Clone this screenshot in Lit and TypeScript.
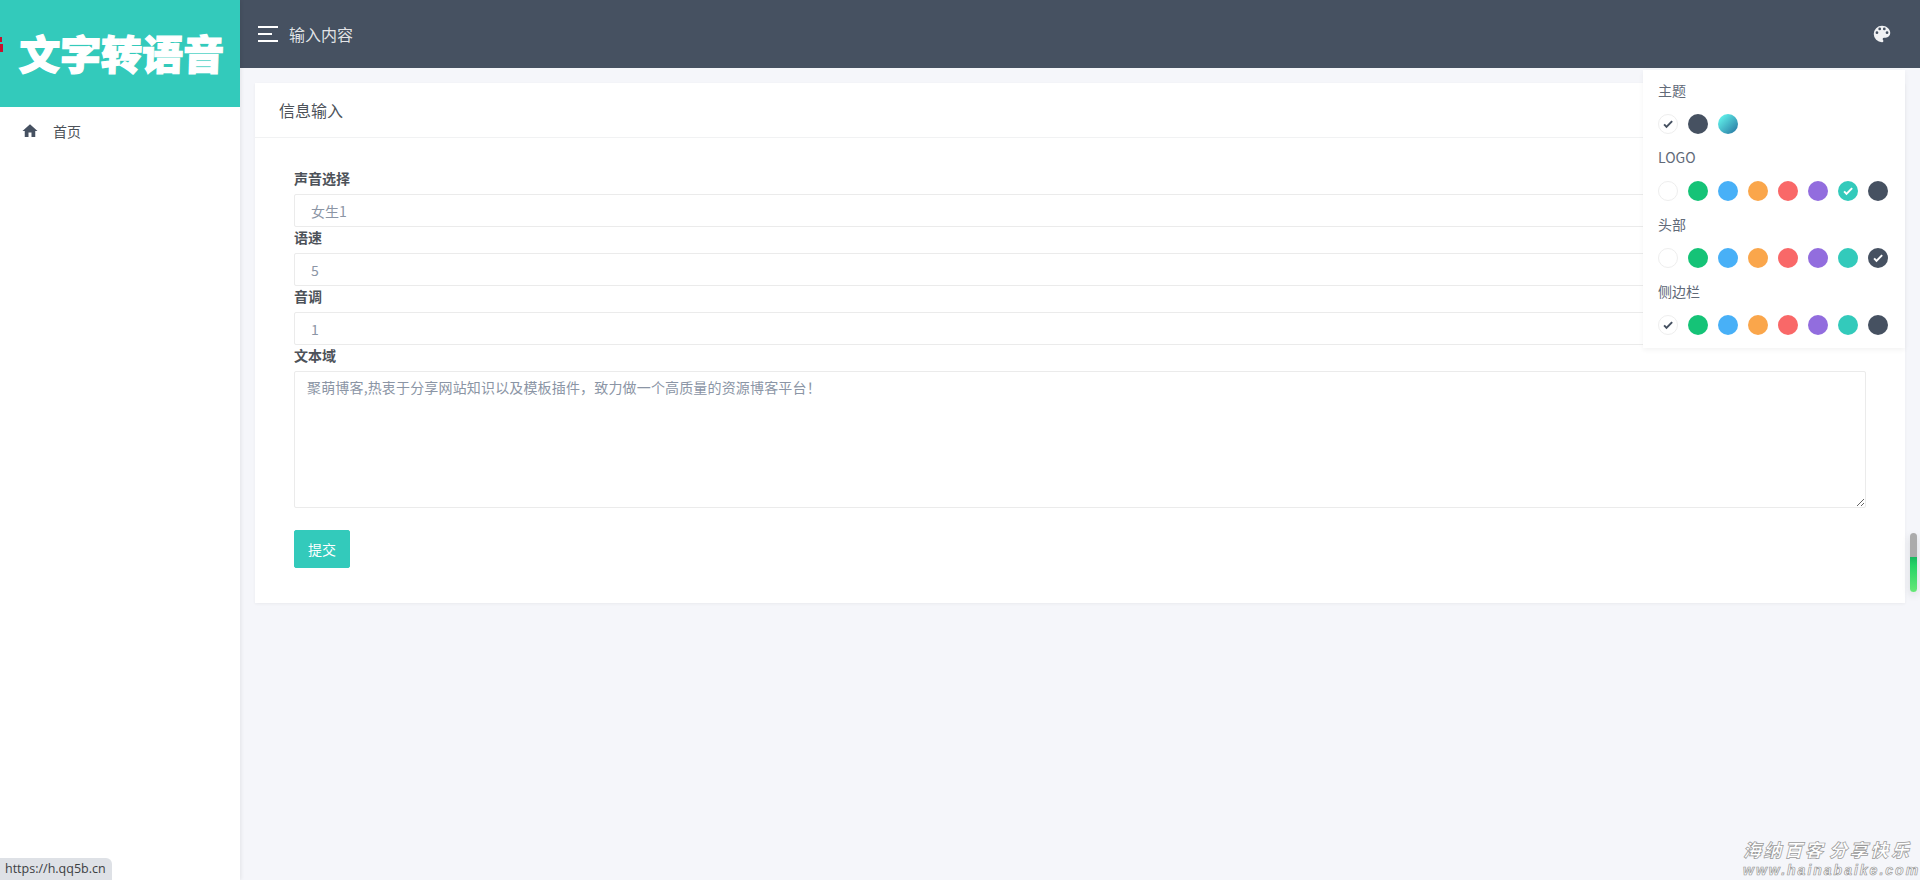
import { LitElement, html, css, svg } from "lit";
import { customElement } from "lit/decorators.js";

const COLORS = ["#fff", "#15c377", "#48b0f7", "#faa64b", "#f96868", "#926dde", "#33cabb", "#465161"];
const CHECK = svg`<path d="M9,20.42L2.79,14.21L5.62,11.38L9,14.77L18.88,4.88L21.71,7.71L9,20.42Z"/>`;

@customElement("app-root")
export class AppRoot extends LitElement {
  static styles = css`
    :host { display: block; height: 880px; overflow: hidden; position: relative; background: #f5f6fa;
      font-family: "Noto Sans CJK SC", "Liberation Sans", sans-serif; font-size: 14px; color: #4d5259; }
    * { box-sizing: border-box; }
    .shell { display: grid; grid-template-columns: 240px 1fr; height: 880px; }
    .side { background: #fff; box-shadow: 1px 0 4px rgba(0,0,0,.08); position: relative; z-index: 1; overflow: hidden; }
    .logo { height: 107px; background: #33cabb; display: flex; align-items: center; padding-left: 19px; position: relative; }
    .logo-text { font-size: 41px; line-height: 1; font-weight: 900; color: #fff; -webkit-text-stroke: 1.2px #fff; white-space: nowrap; transform: translateY(-1px) skewX(-2deg); }
    .mk { position: absolute; left: 0; background: #c8102e; }
    .mk.a { top: 37px; width: 2px; height: 5px; }
    .mk.b { top: 44px; width: 3px; height: 8px; }
    .nav { display: flex; align-items: center; height: 48px; padding-left: 21px; font-size: 14px; color: #4d5259; }
    .nav svg { width: 18px; height: 18px; fill: #465161; margin-right: 14px; }
    .main { min-width: 0; display: flex; flex-direction: column; }
    .top { height: 68px; background: #465161; display: flex; align-items: center; padding: 0 27px 0 18px; color: rgba(255,255,255,.85); font-size: 16px; }
    .burger { width: 20px; height: 16px; display: flex; flex-direction: column; justify-content: space-between; margin-right: 11px; margin-top: -1px; }
    .burger i { display: block; height: 2px; background: #fff; }
    .burger i:nth-child(2) { width: 14px; }
    .title { flex: 1; }
    .pal { width: 22px; height: 22px; fill: #f1f2f4; }
    .content { padding: 15px; }
    .card { background: #fff; box-shadow: 0 1px 3px rgba(0,0,0,.05); }
    .card-h { height: 55px; border-bottom: 1px solid #f1f2f3; padding: 0 24px; display: flex; align-items: center; font-size: 16px; color: #4d5259; }
    .card-b { padding: 30px 39px 35px; }
    label { display: block; height: 26px; line-height: 21px; font-size: 14px; font-weight: 700; color: #4d5259; }
    .inp { display: block; width: 100%; height: 33px; border: 1px solid #ebebeb; border-radius: 2px; padding: 0 16px; font: inherit; color: #8b95a5; background: #fff; outline: none; }
    textarea { display: block; width: 100%; height: 137px; border: 1px solid #ebebeb; border-radius: 2px; padding: 5px 12px; font: inherit; font-size: 14px; line-height: 20px; letter-spacing: .16px; outline: none; margin: 0; }
    textarea::placeholder { color: #8b95a5; opacity: 1; }
    button { display: block; margin-top: 22px; width: 56px; height: 38px; border: 1px solid #33cabb; border-radius: 2px; background: #33cabb; color: #fff; font: inherit; font-size: 14px; padding: 0; }
    .panel { position: absolute; left: 1643px; top: 70px; width: 262px; height: 278px; background: #fff; box-shadow: 0 2px 5px rgba(0,0,0,.05); padding: 11px 15px; z-index: 3; }
    .panel h4 { margin: 0; font-weight: 400; font-size: 14px; line-height: 20px; height: 20px; color: #616a78; position: relative; top: -1px; }
    .dots { display: flex; gap: 10px; margin: 13px 0 14px; }
    .dot { width: 20px; height: 20px; border-radius: 50%; flex: none; display: flex; align-items: center; justify-content: center; }
    .dot.white { border: 1px solid #eeeeee; }
    .dot svg { width: 12px; height: 12px; fill: #fff; }
    .dot.white svg { fill: #465161; }
    .dot.grad { background: linear-gradient(135deg, #62f4ec 10%, #2b7ea6 90%); }
    .scroll { position: absolute; left: 1910px; top: 533px; width: 7px; height: 59px; border-radius: 4px; overflow: hidden; background: linear-gradient(#ababab 0, #ababab 41%, #18b85f 41%, #25d366 55%, #66e877 100%); box-shadow: 0 3px 8px rgba(0,0,0,.12); z-index: 3; }
    .status { position: absolute; left: 0; bottom: 0; width: 112px; height: 22px; background: #dee1e6; border-top-right-radius: 6px; font: 12.5px/22px "Open Sans", "Liberation Sans", sans-serif; color: #3c4043; padding-left: 5px; white-space: nowrap; z-index: 4; }
    .mark { position: absolute; left: 1743px; bottom: 3px; width: max-content; color: #fff; font-style: italic; font-weight: 700; -webkit-text-stroke: .7px #9a9a9a; z-index: 4; white-space: nowrap; }
    .mark b { display: block; font-size: 18px; line-height: 20px; letter-spacing: 2.6px; word-spacing: -3px; }
    .mark span { display: block; margin-top: 4px; font: italic 700 14px/14px "Liberation Sans", sans-serif; letter-spacing: 2px; }
  `;

  private dots(active: number) {
    return html`<div class="dots">${COLORS.map((c, i) => html`
      <span class="dot ${i === 0 ? "white" : ""}" style="background:${c}">${i === active ? html`<svg viewBox="0 0 24 24">${CHECK}</svg>` : ""}</span>`)}</div>`;
  }

  render() {
    return html`
      <div class="shell">
        <aside class="side">
          <div class="logo"><span class="mk a"></span><span class="mk b"></span><span class="logo-text">文字转语音</span></div>
          <div class="nav"><svg viewBox="0 0 24 24"><path d="M10,20V14H14V20H19V12H22L12,3L2,12H5V20H10Z"/></svg>首页</div>
        </aside>
        <div class="main">
          <header class="top">
            <div class="burger"><i></i><i></i><i></i></div>
            <div class="title">输入内容</div>
            <svg class="pal" viewBox="0 0 24 24"><path d="M17.5,12A1.5,1.5 0 0,1 16,10.5A1.5,1.5 0 0,1 17.5,9A1.5,1.5 0 0,1 19,10.5A1.5,1.5 0 0,1 17.5,12M14.5,8A1.5,1.5 0 0,1 13,6.5A1.5,1.5 0 0,1 14.5,5A1.5,1.5 0 0,1 16,6.5A1.5,1.5 0 0,1 14.5,8M9.5,8A1.5,1.5 0 0,1 8,6.5A1.5,1.5 0 0,1 9.5,5A1.5,1.5 0 0,1 11,6.5A1.5,1.5 0 0,1 9.5,8M6.5,12A1.5,1.5 0 0,1 5,10.5A1.5,1.5 0 0,1 6.5,9A1.5,1.5 0 0,1 8,10.5A1.5,1.5 0 0,1 6.5,12M12,3A9,9 0 0,0 3,12A9,9 0 0,0 12,21A1.5,1.5 0 0,0 13.5,19.5C13.5,19.11 13.35,18.76 13.11,18.5C12.88,18.23 12.73,17.88 12.73,17.5A1.5,1.5 0 0,1 14.23,16H16A5,5 0 0,0 21,11C21,6.58 16.97,3 12,3Z"/></svg>
          </header>
          <div class="content">
            <section class="card">
              <div class="card-h">信息输入</div>
              <div class="card-b">
                <label>声音选择</label><input class="inp" value="女生1" />
                <label>语速</label><input class="inp" value="5" />
                <label>音调</label><input class="inp" value="1" />
                <label>文本域</label>
                <textarea placeholder="聚萌博客,热衷于分享网站知识以及模板插件，致力做一个高质量的资源博客平台！"></textarea>
                <button>提交</button>
              </div>
            </section>
          </div>
        </div>
      </div>
      <div class="panel">
        <h4>主题</h4>
        <div class="dots">
          <span class="dot white" style="background:#fff"><svg viewBox="0 0 24 24">${CHECK}</svg></span>
          <span class="dot" style="background:#465161"></span>
          <span class="dot grad"></span>
        </div>
        <h4>LOGO</h4>${this.dots(6)}
        <h4>头部</h4>${this.dots(7)}
        <h4>侧边栏</h4>${this.dots(0)}
      </div>
      <div class="scroll"></div>
      <div class="status">https://h.qq5b.cn</div>
      <div class="mark"><b>海纳百客 分享快乐</b><span>www.hainabaike.com</span></div>
    `;
  }
}
